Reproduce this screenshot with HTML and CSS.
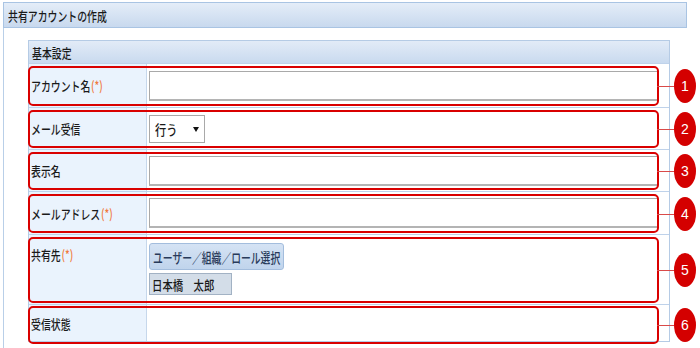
FILE: index.html
```html
<!DOCTYPE html>
<html lang="ja">
<head>
  <meta charset="UTF-8">
  <title>共有アカウントの作成</title>
  <link rel="stylesheet" href="styles.css">
</head>
<body>

<div class="page">
  <div class="title"><span class="sq">共有アカウントの作成</span></div>

  <div class="content">
    <div class="section">
      <div class="section-head"><span class="sq">基本設定</span></div>

      <div class="row row1">
        <div class="label"><span class="sq">アカウント名<em>(*)</em></span></div>
        <div class="value"><input type="text" class="text"></div>
        <div class="mark"><span class="badge">1</span></div>
      </div>

      <div class="row row2">
        <div class="label"><span class="sq">メール受信</span></div>
        <div class="value">
          <div class="select">
            <span class="sq">行う</span>
            <svg class="arrow" width="6" height="6" viewBox="0 0 6 6"><path d="M0 1 L6 1 L3 6 Z" fill="#111"/></svg>
          </div>
        </div>
        <div class="mark"><span class="badge">2</span></div>
      </div>

      <div class="row row3">
        <div class="label"><span class="sq">表示名</span></div>
        <div class="value"><input type="text" class="text"></div>
        <div class="mark"><span class="badge">3</span></div>
      </div>

      <div class="row row4">
        <div class="label"><span class="sq">メールアドレス<em>(*)</em></span></div>
        <div class="value"><input type="text" class="text"></div>
        <div class="mark"><span class="badge">4</span></div>
      </div>

      <div class="row row5">
        <div class="label top"><span class="sq">共有先<em>(*)</em></span></div>
        <div class="value stack">
          <button class="pick"><span class="sq">ユーザー／組織／ロール選択</span></button>
          <div class="chip"><span class="sq">日本橋　太郎</span></div>
        </div>
        <div class="mark"><span class="badge">5</span></div>
      </div>

      <div class="row row6">
        <div class="label"><span class="sq">受信状態</span></div>
        <div class="value"></div>
        <div class="mark"><span class="badge">6</span></div>
      </div>
    </div>
  </div>
</div>

</body>
</html>
```

FILE: styles.css
```css
body {
  margin: 0;
  background: #fff;
  color: #1a1a1a;
  font-family: "Noto Sans CJK JP", "Noto Sans", sans-serif;
  font-size: 13px;
  font-weight: 500;
}
.page {
  padding: 2px 13px 0 3px;
}
.sq {
  display: inline-block;
  white-space: nowrap;
  transform: scaleX(.76);
  transform-origin: 0 50%;
}
.sq em {
  font-style: normal;
  color: #f07a3c;
  margin-left: 1px;
}
.title {
  height: 24px;
  border: 1px solid #a9c4e3;
  background: linear-gradient(#e4edf8, #c8d9ee);
  padding-left: 4px;
  display: flex;
  align-items: center;
}
.content {
  border-left: 1px solid #b9cfe8;
  padding: 12px 0 8px 24px;
}
.section {
  width: 640px;
  border-left: 1px solid #b5cbe5;
  border-right: 1px solid #b5cbe5;
  border-bottom: 1px solid #b5cbe5;
}
.section-head {
  height: 22px;
  border-top: 1px solid #b5cbe5;
  background: linear-gradient(#e2ebf7, #c9daef);
  padding-left: 3px;
  display: flex;
  align-items: center;
}
.row {
  position: relative;
  display: grid;
  grid-template-columns: 118px 1fr;
  border-top: 1px solid #bfd2ea;
}
.row1 { height: 43px; }
.row2 { height: 41px; }
.row3 { height: 41px; }
.row4 { height: 42px; }
.row5 { height: 69px; }
.row6 { height: 36px; }
.label {
  background: #eaf3fd;
  border-right: 1px solid #c6d7eb;
  padding-left: 2px;
  display: flex;
  align-items: center;
}
.label.top {
  align-items: flex-start;
  padding-top: 10px;
}
.value {
  padding: 0 11px 0 2px;
  display: flex;
  align-items: center;
}
.text {
  width: 100%;
  height: 30px;
  box-sizing: border-box;
  margin: 0;
  border: 1px solid #a9a9a9;
  border-right-color: #9c9c9c;
  border-bottom: 2px solid #b4b4b4;
  background: #fff;
}
.select {
  width: 56px;
  height: 28px;
  box-sizing: border-box;
  border: 1px solid #a9a9a9;
  background: #fff;
  padding-left: 5px;
  display: flex;
  align-items: center;
  font-size: 14px;
}
.select .sq {
  transform: scaleX(.8);
}
.select .arrow {
  margin-left: auto;
  margin-right: 5px;
}
.stack {
  flex-direction: column;
  align-items: flex-start;
  justify-content: flex-start;
  padding-top: 8px;
  gap: 3px;
}
.pick {
  width: 135px;
  height: 27px;
  margin: 0;
  padding: 0 0 0 3px;
  box-sizing: border-box;
  border: 1px solid #a3bddd;
  border-radius: 3px;
  background: linear-gradient(#d5e3f4, #c0d4ec);
  color: #283a5a;
  font-family: inherit;
  font-size: 14px;
  font-weight: 500;
  text-align: left;
  display: flex;
  align-items: center;
}
.pick .sq {
  transform: scaleX(.7);
}
.chip {
  width: 83px;
  height: 22px;
  box-sizing: border-box;
  border: 1px solid #a2b2c4;
  background: #d3dde8;
  padding-left: 2px;
  display: flex;
  align-items: center;
}
.chip .sq {
  transform: scaleX(.8);
}
.mark {
  position: absolute;
  top: 2px;
  bottom: 1px;
  left: -1px;
  right: 10px;
  border: 2px solid #d90000;
  border-radius: 5px;
}
.row6 .mark {
  top: 1px;
  bottom: -3px;
}
.badge {
  position: absolute;
  left: calc(100% + 17px);
  top: 50%;
  margin-top: -17px;
  width: 22px;
  height: 34px;
  border-radius: 50%;
  background: #d40000;
  color: #fff;
  font-family: "Liberation Sans", sans-serif;
  font-size: 14px;
  font-weight: normal;
  display: flex;
  align-items: center;
  justify-content: center;
}
.badge::before {
  content: "";
  position: absolute;
  right: 100%;
  top: 50%;
  width: 17px;
  height: 1px;
  background: #d94a4a;
}
```
